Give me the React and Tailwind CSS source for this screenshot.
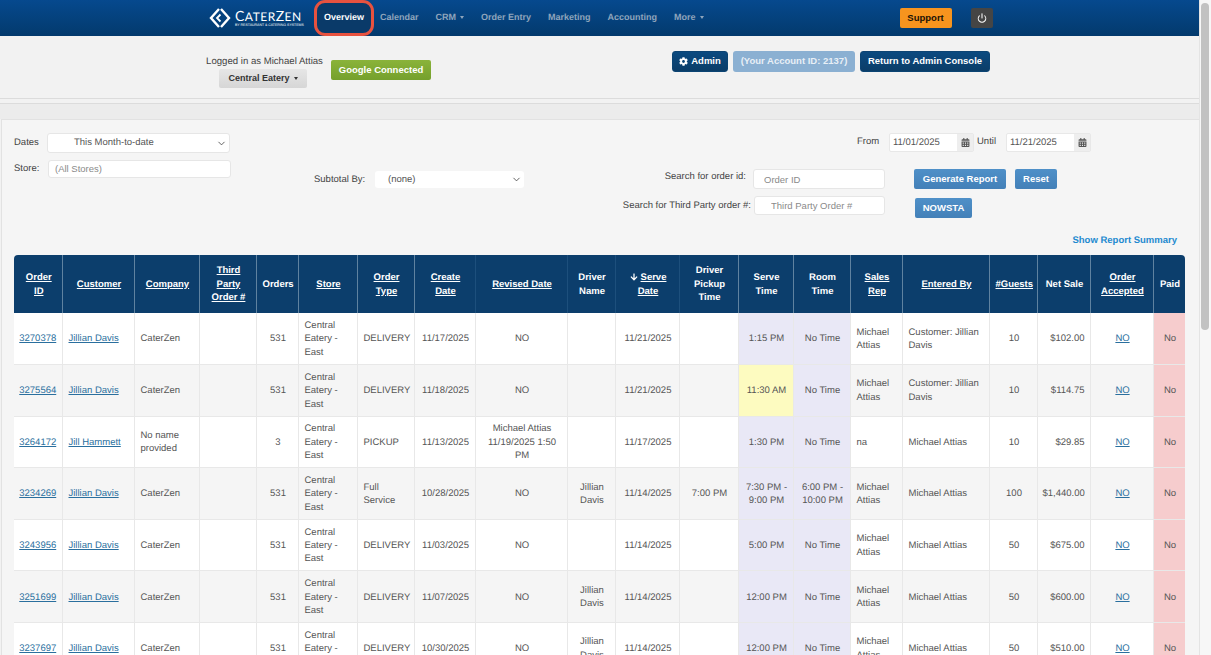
import React from 'react';
import { ChevronDown, Power } from 'lucide-react';
import { FaCalendarAlt, FaCog, FaArrowDown } from 'react-icons/fa';

const columns = [
  { w: 'w-[48px]', cell: 'text-center', head: 'Order ID', link: true, line: 'border-[#5f82a0]' },
  { w: 'w-[72px]', cell: 'text-left', head: 'Customer', link: true, line: 'border-[#5f82a0]' },
  { w: 'w-[65px]', cell: 'text-left', head: 'Company', link: true, line: 'border-[#5f82a0]' },
  { w: 'w-[57px]', cell: 'text-left', head: 'Third Party Order #', link: true, line: 'border-[#5f82a0]' },
  { w: 'w-[42px]', cell: 'text-center', head: 'Orders', line: 'border-[#5f82a0]' },
  { w: 'w-[59px]', cell: 'text-left', head: 'Store', link: true, line: 'border-[#5f82a0]' },
  { w: 'w-[57px]', cell: 'text-left', head: 'Order Type', link: true, line: 'border-[#5f82a0]' },
  { w: 'w-[61px]', cell: 'text-center', head: 'Create Date', link: true, line: 'border-[#1d4f7c]' },
  { w: 'w-[92px]', cell: 'text-center', head: 'Revised Date', link: true, line: 'border-[#1d4f7c]' },
  { w: 'w-[48px]', cell: 'text-center', head: 'Driver Name', line: 'border-[#1d4f7c]' },
  { w: 'w-[64px]', cell: 'text-center', head: 'Serve Date', link: true, arrow: true, line: 'border-[#1d4f7c]' },
  { w: 'w-[59px]', cell: 'text-center', head: 'Driver Pickup Time', line: 'border-[#5f82a0]' },
  { w: 'w-[55px]', cell: 'text-center bg-[#e9e8f6]', head: 'Serve Time', line: 'border-[#5f82a0]' },
  { w: 'w-[57px]', cell: 'text-center bg-[#e9e8f6]', head: 'Room Time', line: 'border-[#5f82a0]' },
  { w: 'w-[52px]', cell: 'text-left', head: 'Sales Rep', link: true, line: 'border-[#5f82a0]' },
  { w: 'w-[87px]', cell: 'text-left', head: 'Entered By', link: true, line: 'border-[#5f82a0]' },
  { w: 'w-[48px]', cell: 'text-center', head: '#Guests', link: true, line: 'border-[#5f82a0]' },
  { w: 'w-[53px]', cell: 'text-right', head: 'Net Sale', line: 'border-[#5f82a0]' },
  { w: 'w-[63px]', cell: 'text-center', head: 'Order Accepted', link: true, line: 'border-[#5f82a0]' },
  { w: 'w-[32px]', cell: 'text-center bg-[#f6cccd]', head: 'Paid', line: 'border-transparent' },
];

const store = 'Central Eatery - East';
const ma = 'Michael Attias';
const jd = 'Jillian Davis';

const rows = [
  ['3270378', jd, 'CaterZen', '', '531', store, 'DELIVERY', '11/17/2025', 'NO', '', '11/21/2025', '', '1:15 PM', 'No Time', ma, 'Customer: Jillian Davis', '10', '$102.00', 'NO', 'No'],
  ['3275564', jd, 'CaterZen', '', '531', store, 'DELIVERY', '11/18/2025', 'NO', '', '11/21/2025', '', '11:30 AM', 'No Time', ma, 'Customer: Jillian Davis', '10', '$114.75', 'NO', 'No'],
  ['3264172', 'Jill Hammett', 'No name provided', '', '3', store, 'PICKUP', '11/13/2025', 'Michael Attias 11/19/2025 1:50 PM', '', '11/17/2025', '', '1:30 PM', 'No Time', 'na', ma, '10', '$29.85', 'NO', 'No'],
  ['3234269', jd, 'CaterZen', '', '531', store, 'Full Service', '10/28/2025', 'NO', jd, '11/14/2025', '7:00 PM', '7:30 PM - 9:00 PM', '6:00 PM - 10:00 PM', ma, ma, '100', '$1,440.00', 'NO', 'No'],
  ['3243956', jd, 'CaterZen', '', '531', store, 'DELIVERY', '11/03/2025', 'NO', '', '11/14/2025', '', '5:00 PM', 'No Time', ma, ma, '50', '$675.00', 'NO', 'No'],
  ['3251699', jd, 'CaterZen', '', '531', store, 'DELIVERY', '11/07/2025', 'NO', jd, '11/14/2025', '', '12:00 PM', 'No Time', ma, ma, '50', '$600.00', 'NO', 'No'],
  ['3237697', jd, 'CaterZen', '', '531', store, 'DELIVERY', '10/30/2025', 'NO', jd, '11/14/2025', '', '12:00 PM', 'No Time', ma, ma, '50', '$510.00', 'NO', 'No'],
];

const linkCols = [0, 1, 18];

function Caret() {
  return <span className="ml-1 inline-block align-middle border-x-[2.5px] border-t-[3px] border-x-transparent border-t-current" />;
}

function NavItem({ children, caret, className = '' }) {
  return (
    <span className={`text-[9px] font-bold text-[#8fa5bc] whitespace-nowrap ${className}`}>
      {children}
      {caret && <Caret />}
    </span>
  );
}

function Logo() {
  return (
    <div className="flex items-center w-[92px] shrink-0">
      <svg className="shrink-0" width="22" height="22" viewBox="0 0 22 22" fill="none" stroke="#fff" strokeWidth="2.4">
        <path d="M10 2 L2 11 L10 20" />
        <path d="M12 2 L20 11 L12 20" />
        <path d="M11.5 7.5 L8 11 L11.5 14.5" strokeWidth="1.8" />
      </svg>
      <div className="ml-[4px] flex flex-col text-white">
        <span className="text-[12px] leading-[13px] tracking-[0.5px] font-['Lato',sans-serif] whitespace-nowrap">
          <span className="text-[14px]">C</span>ATER<span className="text-[14px]">Z</span>EN
        </span>
        <span className="text-[3.5px] leading-[5px] whitespace-nowrap font-['Liberation_Sans',sans-serif]">BY RESTAURANT &amp; CATERING SYSTEMS</span>
      </div>
    </div>
  );
}

function NavBar() {
  return (
    <div className="h-[36px] flex items-center pl-[209px] bg-gradient-to-b from-[#06498e] to-[#033a6d]">
      <Logo />
      <div className="ml-[13px] h-[36px] w-[60px] shrink-0 flex items-center justify-center rounded-[11px] border-[3px] border-[#e8523f] bg-[#0a3a69]">
        <span className="text-[9px] font-bold text-white">Overview</span>
      </div>
      <NavItem className="ml-[6px]">Calendar</NavItem>
      <NavItem className="ml-[17px]" caret>CRM</NavItem>
      <NavItem className="ml-[17px]">Order Entry</NavItem>
      <NavItem className="ml-[17px]">Marketing</NavItem>
      <NavItem className="ml-[17px]">Accounting</NavItem>
      <NavItem className="ml-[17px]" caret>More</NavItem>
      <button className="ml-[196px] h-[20px] w-[52px] rounded-[2px] bg-[#f7941e] text-[9.5px] font-bold text-[#1b1206]">Support</button>
      <button className="ml-[19px] h-[20px] w-[22px] rounded-[2px] bg-[#454545] flex items-center justify-center">
        <Power size={10} color="#fff" strokeWidth={2.5} />
      </button>
    </div>
  );
}

function NavyButton({ children, className = '' }) {
  return (
    <button className={`h-[21px] rounded-[3px] border border-[#0c4473] bg-gradient-to-b from-[#0b4a80] to-[#0b3d68] text-[9.5px] font-bold text-white flex items-center justify-center ${className}`}>
      {children}
    </button>
  );
}

function AccountBar() {
  return (
    <div className="h-[62px] flex bg-[#f2f2f2]">
      <div className="ml-[206px] mt-[19px] w-[117px] flex flex-col items-center">
        <span className="text-[9.6px] leading-[13px] text-[#444] whitespace-nowrap">Logged in as Michael Attias</span>
        <button className="mt-[1px] mr-[3px] h-[19px] w-[88px] rounded-[2px] bg-gradient-to-b from-[#e6e6e6] to-[#d6d6d6] text-[9px] font-bold text-[#333]">
          Central Eatery
          <Caret />
        </button>
      </div>
      <button className="ml-[8px] mt-[24px] h-[20px] w-[100px] rounded-[2px] bg-gradient-to-b from-[#8ab33a] to-[#75a02c] text-[9.5px] font-bold text-white">
        Google Connected
      </button>
      <div className="ml-[241px] mt-[15px] flex gap-[5px]">
        <NavyButton className="w-[56px] gap-[3px]"><FaCog size={9} />Admin</NavyButton>
        <button className="h-[21px] w-[122px] rounded-[3px] bg-[#8bb0d2] text-[9.5px] font-bold text-[#e8eff6]">(Your Account ID: 2137)</button>
        <NavyButton className="w-[130px]">Return to Admin Console</NavyButton>
      </div>
    </div>
  );
}

function SelectBox({ className = '', children }) {
  return (
    <div className={`flex items-center justify-between rounded-[3px] bg-white text-[9.5px] text-[#555] border border-[#e6e6e6] pr-[2px] ${className}`}>
      <span className="pt-[1px]">{children}</span>
      <ChevronDown size={11} color="#444" strokeWidth={1.8} />
    </div>
  );
}

function TextBox({ placeholder, className = '' }) {
  return (
    <input
      readOnly
      placeholder={placeholder}
      className={`rounded-[3px] bg-white border border-[#e6e6e6] text-[9.5px] outline-none placeholder:text-[#8a8a8a] ${className}`}
    />
  );
}

function DateBox({ value }) {
  return (
    <div className="h-[19px] flex rounded-[2px] border border-[#e8e8e8] bg-white">
      <span className="w-[67px] pl-[3px] text-[9.5px] leading-[18px] text-[#555]">{value}</span>
      <span className="w-[16px] flex items-center justify-center bg-[#eee] text-[#555]"><FaCalendarAlt size={9} /></span>
    </div>
  );
}

function BlueButton({ children, className = '' }) {
  return (
    <button className={`h-[20px] rounded-[2px] bg-gradient-to-b from-[#4f90c8] to-[#4380b8] text-[9.5px] font-bold text-white ${className}`}>
      {children}
    </button>
  );
}

function Filters() {
  return (
    <div className="flex h-[105px] text-[9.5px] text-[#444]">
      <div className="w-[217px] pt-[13px] shrink-0">
        <div className="flex items-center h-[20px]">
          <span className="w-[33px] pt-[1px]">Dates</span>
          <SelectBox className="w-[183px] h-[20px] pl-[26px]">This Month-to-date</SelectBox>
        </div>
        <div className="flex items-center h-[18px] mt-[7px]">
          <span className="w-[34px]">Store:</span>
          <TextBox placeholder="(All Stores)" className="w-[183px] h-[18px] pl-[6px] pb-[1px]" />
        </div>
      </div>
      <div className="flex-1 pt-[13px]">
        <div className="flex items-center h-[19px] pl-[626px]">
          <span className="w-[32px]">From</span>
          <DateBox value="11/01/2025" />
          <span className="ml-[3px] w-[29px]">Until</span>
          <DateBox value="11/21/2025" />
        </div>
        <div className="flex mt-[17px]">
          <div className="ml-[83px] mt-[2px] flex items-center h-[17px]">
            <span className="w-[61px] pt-[2px]">Subtotal By:</span>
            <SelectBox className="w-[149px] h-[17px] pl-[13px] border-0">(none)</SelectBox>
          </div>
          <div className="ml-[99px] w-[262px] flex flex-col items-end">
            <div className="flex items-center h-[20px]">
              <span className="mr-[7px] mb-[4px] whitespace-nowrap">Search for order id:</span>
              <TextBox placeholder="Order ID" className="w-[132px] h-[20px] pl-[10px]" />
            </div>
            <div className="flex items-center h-[19px] mt-[7px]">
              <span className="mr-[3px] pt-[1px] whitespace-nowrap">Search for Third Party order #:</span>
              <TextBox placeholder="Third Party Order #" className="w-[131px] h-[19px] pl-[16px]" />
            </div>
          </div>
          <div className="ml-[29px] flex flex-col">
            <div className="flex gap-[9px]">
              <BlueButton className="w-[92px]">Generate Report</BlueButton>
              <BlueButton className="w-[42px]">Reset</BlueButton>
            </div>
            <BlueButton className="mt-[9px] ml-[1px] w-[57px]">NOWSTA</BlueButton>
          </div>
        </div>
      </div>
    </div>
  );
}

function HeadCell({ col }) {
  const label = col.link ? <span className="underline">{col.head}</span> : col.head;
  return (
    <th className={`${col.w} h-[58px] pl-[6px] pr-[4px] pt-[1px] border-r ${col.line} text-center align-middle text-[9.5px] leading-[13.4px] font-bold text-white`}>
      {col.arrow && <FaArrowDown size={8} className="inline mr-[3px] -mt-[2px]" />}
      {label}
    </th>
  );
}

function BodyCell({ col, value, colIndex }) {
  const yellow = value === '11:30 AM';
  const isLink = linkCols.includes(colIndex);
  let pad = 'pl-[6px] pr-[4px]';
  if (colIndex === 0) pad = 'px-[2px]';
  if (colIndex === 17) pad = 'px-[5px]';
  return (
    <td className={`h-[51.6px] ${pad} pt-[1px] border-r border-b border-[#e8e8e8] align-middle text-[9.5px] leading-[13.4px] text-[#555] ${col.cell} ${yellow ? '!bg-[#fdfbc0]' : ''}`}>
      {isLink ? <a className="underline text-[#2a6f9e]">{value}</a> : value}
    </td>
  );
}

function ReportTable() {
  return (
    <div className="overflow-hidden rounded-t-[4px] w-[1171px]">
      <table className="w-[1171px] table-fixed border-collapse">
        <thead>
          <tr className="bg-[#0c3e6c]">
            {columns.map((col) => <HeadCell key={col.head} col={col} />)}
          </tr>
        </thead>
        <tbody>
          {rows.map((row, i) => (
            <tr key={row[0]} className={i % 2 === 0 ? 'bg-white' : 'bg-[#f5f5f5]'}>
              {row.map((value, j) => (
                <BodyCell key={j} col={columns[j]} value={value} colIndex={j} />
              ))}
            </tr>
          ))}
        </tbody>
      </table>
    </div>
  );
}

export default function App() {
  return (
    <div className="h-screen overflow-hidden flex bg-[#f2f2f2] font-['Liberation_Sans',sans-serif] [text-rendering:geometricPrecision]">
      <div className="w-[1199px] shrink-0">
        <NavBar />
        <AccountBar />
        <div className="h-[6px] border-y border-[#dcdcdc] bg-[#f2f2f2]" />
        <div className="h-[15px] bg-[#ececec]" />
        <div className="ml-[1px] pl-[12px] border-t border-l border-[#e2e2e2] bg-[#f5f5f5] h-[540px]">
          <Filters />
          <div className="h-[30px] pr-[22px] pt-[9px] text-right text-[9.5px] font-bold text-[#1f8ad0]">Show Report Summary</div>
          <ReportTable />
        </div>
      </div>
      <div className="flex-1 bg-[#f7f7f7] border-l border-[#e4e4e4] pt-[3px] pl-[1px]">
        <div className="w-[8px] h-[327px] rounded-full bg-[#c2c2c2]" />
      </div>
    </div>
  );
}
